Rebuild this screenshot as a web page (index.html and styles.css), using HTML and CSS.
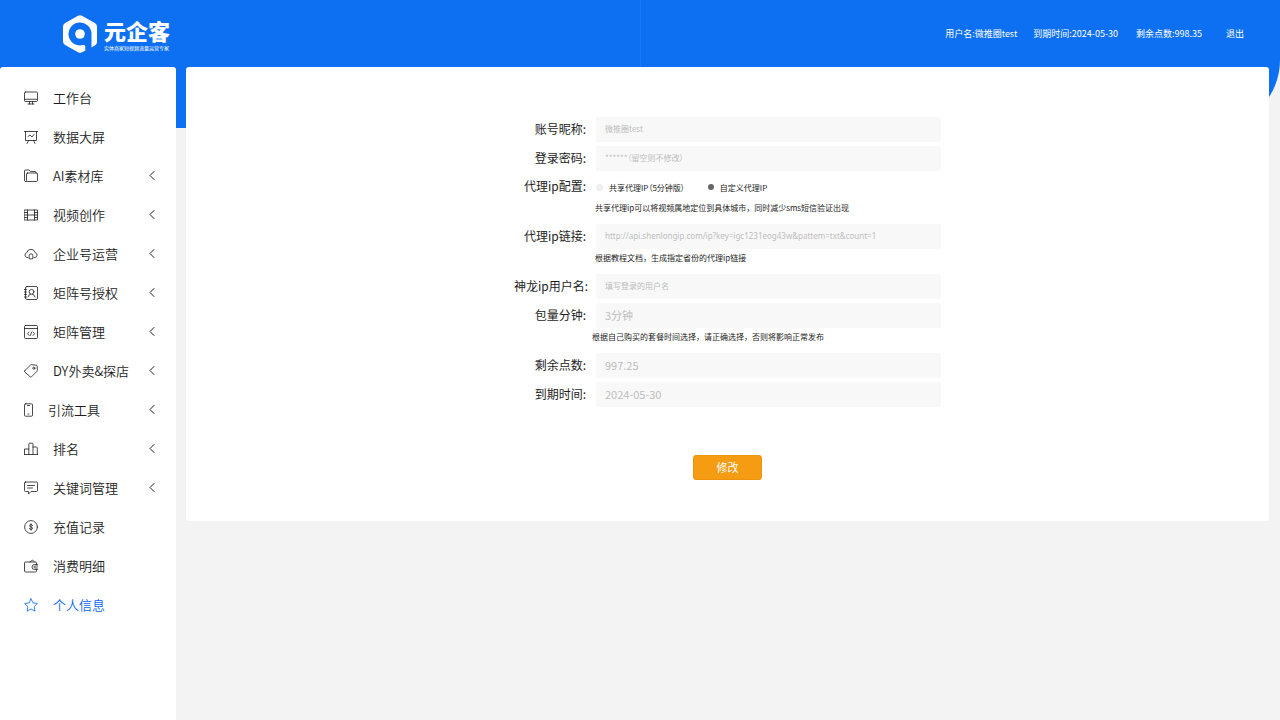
FILE: index.html
```
<!DOCTYPE html>
<html lang="zh-CN">
<head>
<meta charset="utf-8">
<meta name="viewport" content="width=device-width, initial-scale=1">
<title>元企客 - 个人信息</title>
<link rel="stylesheet" href="styles.css">
</head>
<body>
<div class="page">
  <div class="backdrop"></div>
  <header class="header">
    <a class="brand" href="#">
      <svg class="brand-mark" viewBox="0 0 34 38" width="34" height="38" aria-hidden="true">
        <path fill="#fff" fill-rule="evenodd" d="M15 .8Q17 -.3 19 .8L31.800 8Q34 9.200 34 11.500V27Q34 29 32.500 30L28.500 32.500V19A11.500 11.500 0 1 0 20 30.100Q22.300 29.500 22.300 31.500V35.500L19 37.300Q17 38.400 15 37.300L2.200 30Q0 28.700 0 26.500V11.500Q0 9.200 2.200 8Z"/>
        <circle cx="17" cy="19" r="4.800" fill="#fff"/>
      </svg>
      <span class="brand-text">
        <span class="brand-name">元企客</span>
        <span class="brand-sub">实体商家短视频流量运营专家</span>
      </span>
    </a>
    <div class="account">
      <span class="account-user">用户名:微推圈test</span>
      <span class="account-expiry">到期时间:2024-05-30</span>
      <span class="account-points">剩余点数:998.35</span>
      <a href="#">退出</a>
    </div>
  </header>
  <div class="body">
    <nav class="sidebar">
      <a class="item" href="#"><svg class="icon" viewBox="0 0 14 14" width="14" height="14"><rect x=".5" y="1" width="13" height="9.500" rx="1"/><path d="M1 8.300H13M5.500 10.500V13M8.500 10.500V13M4 13H10"/></svg>工作台</a>
      <a class="item" href="#"><svg class="icon" viewBox="0 0 14 14" width="14" height="14"><path d="M0 1.500H14M1.500 1.500V10.500H12.500V1.500M4 6.500L6 5L8 7L10 4.500M4.500 10.500L3 13.500M9.500 10.500L11 13.500"/></svg>数据大屏</a>
      <a class="item" href="#"><svg class="icon" viewBox="0 0 14 14" width="14" height="14"><path d="M2.500 12.500H1.500Q.5 12.500 .5 11.500V2Q.5 1 1.500 1H5L6.500 2.500H11Q12 2.500 12 3.500V4"/><rect x="2.500" y="4" width="11" height="8.500" rx="1"/></svg>AI素材库<svg class="chevron" viewBox="0 0 6 9" width="6" height="9"><path d="M5 .5L1 4.500L5 8.500"/></svg></a>
      <a class="item" href="#"><svg class="icon" viewBox="0 0 14 14" width="14" height="14"><rect x=".5" y="2" width="13" height="10"/><path d="M3.500 2V12M10.500 2V12M3.500 7H10.500M.5 4.500H3.500M.5 7H3.500M.5 9.500H3.500M10.500 4.500H13.500M10.500 7H13.500M10.500 9.500H13.500"/></svg>视频创作<svg class="chevron" viewBox="0 0 6 9" width="6" height="9"><path d="M5 .5L1 4.500L5 8.500"/></svg></a>
      <a class="item" href="#"><svg class="icon" viewBox="0 0 14 14" width="14" height="14"><path d="M4 10.500H3A2.500 2.500 0 0 1 2.900 5.600A4.200 4.200 0 0 1 11.100 5.600A2.500 2.500 0 0 1 11 10.500H10"/><path d="M5.200 11.500V8.500Q5.200 6.800 7 6.800Q8.800 6.800 8.800 8.500V11.500Z"/></svg>企业号运营<svg class="chevron" viewBox="0 0 6 9" width="6" height="9"><path d="M5 .5L1 4.500L5 8.500"/></svg></a>
      <a class="item" href="#"><svg class="icon" viewBox="0 0 14 14" width="14" height="14"><rect x="1.500" y=".5" width="12" height="13" rx="1.500"/><circle cx="7.500" cy="5.800" r="2.400"/><path d="M4 11Q4.500 8.500 6.500 8.200M11 11Q10.500 8.500 8.500 8.200M0 3.500H2.500M0 6H2.500M0 8.500H2.500M0 11H2.500"/></svg>矩阵号授权<svg class="chevron" viewBox="0 0 6 9" width="6" height="9"><path d="M5 .5L1 4.500L5 8.500"/></svg></a>
      <a class="item" href="#"><svg class="icon" viewBox="0 0 14 14" width="14" height="14"><rect x=".5" y=".5" width="13" height="13" rx="1"/><path d="M.5 3.500H13.500M5 7L3.500 8.800L5 10.500M9 7L10.500 8.800L9 10.500M7.700 7L6.300 10.500"/></svg>矩阵管理<svg class="chevron" viewBox="0 0 6 9" width="6" height="9"><path d="M5 .5L1 4.500L5 8.500"/></svg></a>
      <a class="item" href="#"><svg class="icon" viewBox="0 0 14 14" width="14" height="14"><path d="M.7 6.800L6.500 1Q7 .7 7.600 .7L12.300 1.200Q13.200 1.300 13.200 2.200L13.300 6.300Q13.300 7 12.900 7.400L7.500 12.800Q6.800 13.300 6.100 12.700L.8 8Q.2 7.300 .7 6.800Z"/><circle cx="9.800" cy="4.200" r="1.100"/></svg>DY外卖&amp;探店<svg class="chevron" viewBox="0 0 6 9" width="6" height="9"><path d="M5 .5L1 4.500L5 8.500"/></svg></a>
      <a class="item" href="#"><svg class="icon" viewBox="0 0 9 14" width="9" height="14"><rect x=".5" y=".8" width="8" height="12.400" rx="1"/><path d="M3.500 2.500H5.500M4 11H5"/></svg>引流工具<svg class="chevron" viewBox="0 0 6 9" width="6" height="9"><path d="M5 .5L1 4.500L5 8.500"/></svg></a>
      <a class="item" href="#"><svg class="icon" viewBox="0 0 14 14" width="14" height="14"><path d="M0 12.500H14M.5 12.500V7H4.800M4.800 12.500V2Q4.800 1.200 5.600 1.200H8.200Q9 1.200 9 2V12.500M9 5H12.500Q13.300 5 13.300 5.800V12.500"/></svg>排名<svg class="chevron" viewBox="0 0 6 9" width="6" height="9"><path d="M5 .5L1 4.500L5 8.500"/></svg></a>
      <a class="item" href="#"><svg class="icon" viewBox="0 0 14 14" width="14" height="14"><path d="M1.500 1H12.500Q13.500 1 13.500 2V9.500Q13.500 10.500 12.500 10.500H7L4.500 13V10.500H1.500Q.5 10.500 .5 9.500V2Q.5 1 1.500 1ZM3.500 4.500H10.500M3.500 7H8.500"/></svg>关键词管理<svg class="chevron" viewBox="0 0 6 9" width="6" height="9"><path d="M5 .5L1 4.500L5 8.500"/></svg></a>
      <a class="item" href="#"><svg class="icon" viewBox="0 0 14 14" width="14" height="14"><circle cx="7" cy="7" r="6.400"/><path d="M8.600 5.500Q8.300 4.600 7 4.600Q5.500 4.600 5.500 5.700Q5.500 6.700 7 7Q8.600 7.300 8.600 8.300Q8.600 9.400 7 9.400Q5.600 9.400 5.400 8.400M7 3.700V10.300"/></svg>充值记录</a>
      <a class="item" href="#"><svg class="icon" viewBox="0 0 14 14" width="14" height="14"><path d="M12.500 5.500V4Q12.500 3 11.500 3H1.500Q.5 3 .5 4V12Q.5 13 1.500 13H11.500Q12.500 13 12.500 12V10.500M6 3L8.500 1L10.500 3M13.500 5.500H10.500A2.500 2.500 0 0 0 10.500 10.500H13.500M13.500 7H11A1 1 0 0 0 11 9H13.500"/></svg>消费明细</a>
      <a class="item item-active" href="#" aria-current="page"><svg class="icon" viewBox="0 0 14 14" width="14" height="14"><path d="M7 .8L9 4.900L13.400 5.500L10.200 8.600L11 13.100L7 11L3 13.100L3.800 8.600L.6 5.500L5 4.900Z"/></svg>个人信息</a>
    </nav>
    <main class="card">
      <form class="form">
        <div class="group">
          <div class="field"><label class="field-name" for="nick">账号昵称:</label><input class="text-input" id="nick" type="text" placeholder="微推圈test"></div>
        </div>
        <div class="group">
          <div class="field"><label class="field-name" for="pwd">登录密码:</label><input class="text-input" id="pwd" type="password" placeholder="******（留空则不修改）"></div>
        </div>
        <div class="group group-hinted" role="radiogroup" aria-labelledby="proxy-mode">
          <div class="field">
            <span class="field-name" id="proxy-mode">代理ip配置:</span>
            <div class="radios">
              <label class="radio"><input type="radio" name="proxy">共享代理IP（5分钟版）</label>
              <label class="radio"><input type="radio" name="proxy" checked>自定义代理IP</label>
            </div>
          </div>
          <p class="hint">共享代理ip可以将视频属地定位到具体城市，同时减少sms短信验证出现</p>
        </div>
        <div class="group group-hinted">
          <div class="field"><label class="field-name" for="link">代理ip链接:</label><input class="text-input text-input-url" id="link" type="text" placeholder="http://api.shenlongip.com/ip?key=igc1231eog43w&amp;pattem=txt&amp;count=1"></div>
          <p class="hint">根据教程文档，生成指定省份的代理ip链接</p>
        </div>
        <div class="group">
          <div class="field"><label class="field-name" for="slname">神龙ip用户名:</label><input class="text-input" id="slname" type="text" placeholder="填写登录的用户名"></div>
        </div>
        <div class="group group-hinted">
          <div class="field"><label class="field-name" for="mins">包量分钟:</label><input class="text-input text-input-large" id="mins" type="text" placeholder="3分钟"></div>
          <p class="hint hint-wide">根据自己购买的套餐时间选择，请正确选择，否则将影响正常发布</p>
        </div>
        <div class="group">
          <div class="field"><label class="field-name" for="points">剩余点数:</label><input class="text-input text-input-large" id="points" type="text" placeholder="997.25"></div>
        </div>
        <div class="group">
          <div class="field"><label class="field-name" for="expiry">到期时间:</label><input class="text-input text-input-large" id="expiry" type="text" placeholder="2024-05-30"></div>
        </div>
        <button class="submit" type="button">修改</button>
      </form>
    </main>
  </div>
</div>
</body>
</html>
```
FILE: styles.css
```
* {
  box-sizing: border-box;
}

body {
  margin: 0;
  background: #f3f3f3;
  color: #1d1d1d;
  font-family: "Noto Sans CJK SC", "Noto Sans", sans-serif;
}

a {
  color: inherit;
  text-decoration: none;
}

.page {
  position: relative;
  display: flex;
  flex-direction: column;
  min-height: 100vh;
}

/* Blue band that runs behind the header and the top of the content */
.backdrop {
  position: absolute;
  top: 0;
  left: 0;
  right: 0;
  height: 128px;
  background: linear-gradient(#1a78f5, #1a78f5) center / 1px 100% no-repeat #0d70f3;
  border-bottom-right-radius: 68px;
}

.header {
  position: relative;
  display: flex;
  align-items: center;
  justify-content: space-between;
  height: 67px;
  padding: 0 36px 0 63px;
  color: #fff;
}

.brand {
  display: flex;
  align-items: center;
  gap: 7px;
}

.brand-text {
  display: flex;
  flex-direction: column;
  gap: 2px;
  padding-top: 2px;
}

.brand-name {
  font-size: 22px;
  line-height: 24px;
  font-weight: 900;
}

.brand-sub {
  font-size: 5px;
  line-height: 8px;
  white-space: nowrap;
}

.account {
  display: flex;
  font-size: 9px;
  line-height: 16px;
  white-space: nowrap;
}

.account-user {
  margin-right: 16px;
}

.account-expiry {
  margin-right: 18px;
}

.account-points {
  margin-right: 24px;
}

.body {
  position: relative;
  display: grid;
  grid-template-columns: 176px minmax(0, 1fr);
  gap: 10px;
  flex: 1;
  padding-right: 11px;
}

.sidebar {
  padding: 11px 21px 11px 24px;
  background: #fff;
  border-radius: 3px 3px 0 0;
}

.item {
  display: flex;
  align-items: center;
  gap: 15px;
  height: 39px;
  font-size: 13px;
  font-weight: 350;
  white-space: nowrap;
}

.item-active {
  color: #0866ee;
}

.icon,
.chevron {
  flex: none;
  fill: none;
  stroke: currentColor;
  stroke-width: 0.8;
  stroke-linecap: round;
  stroke-linejoin: round;
}

.chevron {
  margin-left: auto;
  stroke-width: 1;
}

.card {
  align-self: start;
  padding: 50px 20px 41px;
  background: #fff;
  border-radius: 3px;
}

.form {
  display: flex;
  flex-direction: column;
  max-width: 427px;
  margin: 0 auto;
}

.group {
  margin-bottom: 4px;
}

.group-hinted {
  margin-bottom: 8px;
}

.field {
  display: grid;
  grid-template-columns: 72px minmax(0, 1fr);
  gap: 10px;
  align-items: center;
}

.field-name {
  padding-bottom: 2px;
  font-size: 12px;
  line-height: 22px;
  text-align: right;
  white-space: nowrap;
}

.text-input {
  width: 100%;
  height: 25px;
  padding: 0 9px 2px;
  border: 0;
  border-radius: 2px;
  background: #f8f8f8;
  color: #555;
  font-family: inherit;
  font-feature-settings: "palt";
  font-size: 8px;
}

.text-input::placeholder {
  color: #bdbdbd;
}

.text-input-url {
  font-family: "Noto Sans", "Noto Sans CJK SC", sans-serif;
}

.text-input-large {
  font-size: 11px;
}

.radios {
  display: flex;
  gap: 23px;
}

.radio {
  display: flex;
  align-items: center;
  gap: 6px;
  font-feature-settings: "palt";
  font-size: 8px;
  white-space: nowrap;
}

.radio input {
  appearance: none;
  width: 7px;
  height: 7px;
  margin: 0;
  border-radius: 50%;
  background: #eee;
}

.radio input:checked {
  width: 6px;
  height: 6px;
  background: #666;
}

.hint {
  margin: 0 0 0 81px;
  font-size: 8px;
  line-height: 17px;
}

.hint-wide {
  margin-left: 78px;
}

.submit {
  align-self: center;
  width: 69px;
  height: 25px;
  margin-top: 44px;
  padding: 0 0 1px;
  border: 1px solid #ee930b;
  border-radius: 3px;
  background: #f59c12;
  color: #fff;
  font-family: inherit;
  font-size: 11px;
}
```
